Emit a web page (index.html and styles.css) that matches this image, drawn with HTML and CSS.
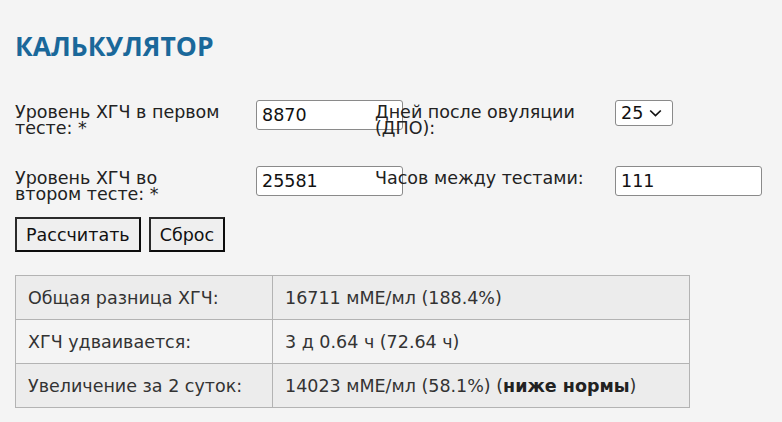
FILE: index.html
```html
<!DOCTYPE html>
<html lang="ru">
<head>
<meta charset="utf-8">
<title>Калькулятор ХГЧ</title>
<link rel="stylesheet" href="styles.css">
</head>
<body>
<div class="page">
  <h1 class="title">КАЛЬКУЛЯТОР</h1>
  <form class="calc">
    <div class="grid">
      <label class="lbl" for="h1">Уровень ХГЧ в первом тесте: *</label>
      <div class="cell"><input id="h1" class="field" type="text" value="8870"></div>
      <label class="lbl lbl-right" for="dpo">Дней после овуляции (ДПО):</label>
      <div class="cell">
        <div class="select"><span>25</span>
          <svg class="chev" width="13" height="8" viewBox="0 0 13 8"><path d="M1.2 1.5 L6.5 6.5 L11.8 1.5" fill="none" stroke="#111" stroke-width="1.7"/></svg>
        </div>
      </div>
      <label class="lbl" for="h2">Уровень ХГЧ во втором тесте: *</label>
      <div class="cell"><input id="h2" class="field" type="text" value="25581"></div>
      <label class="lbl lbl-right" for="hrs">Часов между тестами:</label>
      <div class="cell"><input id="hrs" class="field" type="text" value="111"></div>
    </div>
    <div class="buttons">
      <button type="button" class="btn">Рассчитать</button>
      <button type="button" class="btn">Сброс</button>
    </div>
  </form>
  <table class="results">
    <tr class="odd"><td class="k">Общая разница ХГЧ:</td><td>16711 мМЕ/мл (188.4%)</td></tr>
    <tr><td class="k">ХГЧ удваивается:</td><td>3 д 0.64 ч (72.64 ч)</td></tr>
    <tr class="odd"><td class="k">Увеличение за 2 суток:</td><td>14023 мМЕ/мл (58.1%) (<b>ниже нормы</b>)</td></tr>
  </table>
</div>
</body>
</html>
```
FILE: styles.css
```css
html, body {
  margin: 0;
  padding: 0;
  background: #f4f4f4;
}
body {
  font-family: "DejaVu Sans", Verdana, sans-serif;
  font-size: 17.5px;
  color: #222;
}
.page {
  padding: 30px 15px 0 15px;
}
.title {
  margin: 0;
  font-family: "Open Sans", "Noto Sans", sans-serif;
  font-weight: 700;
  font-size: 26.5px;
  line-height: 32px;
  color: #1a689a;
}
.calc {
  margin-top: 38px;
}
.grid {
  display: grid;
  grid-template-columns: 241px 119px 240px auto;
  grid-auto-rows: 66px;
  align-items: start;
}
.lbl {
  position: relative;
  z-index: 1;
  max-width: 210px;
  line-height: 16px;
  padding-top: 4px;
  color: #222;
}
.lbl-right {
  max-width: 230px;
}
.cell {
  position: relative;
}
.field {
  display: block;
  box-sizing: border-box;
  width: 147px;
  height: 30px;
  margin: 0;
  padding: 0 5px;
  border: 1px solid #8a8a8a;
  border-radius: 3px;
  background: #fff;
  font-family: "DejaVu Sans", Verdana, sans-serif;
  font-size: 17.5px;
  color: #111;
}
.select {
  box-sizing: border-box;
  width: 58px;
  height: 26px;
  border: 1px solid #8a8a8a;
  border-radius: 3px;
  background: #fff;
  display: flex;
  align-items: center;
  padding: 0 5px;
  gap: 6px;
  color: #111;
}
.buttons {
  display: flex;
  gap: 8px;
  margin-top: -15px;
}
.btn {
  box-sizing: border-box;
  height: 35px;
  margin: 0;
  padding: 0 9px;
  border: 2px solid #2a2a2a;
  border-right-color: #0c0c0c;
  border-bottom-color: #0c0c0c;
  background: #efefef;
  font-family: "DejaVu Sans", Verdana, sans-serif;
  font-size: 17.5px;
  color: #111;
}
.results {
  margin-top: 23px;
  border-collapse: collapse;
  width: 675px;
}
.results td {
  border: 1px solid #b3b3b3;
  height: 44px;
  padding: 0 12px;
  box-sizing: border-box;
  color: #333;
}
.results td.k {
  width: 257px;
}
.results tr.odd td {
  background: #ececec;
}
.results b {
  color: #222;
}
```
